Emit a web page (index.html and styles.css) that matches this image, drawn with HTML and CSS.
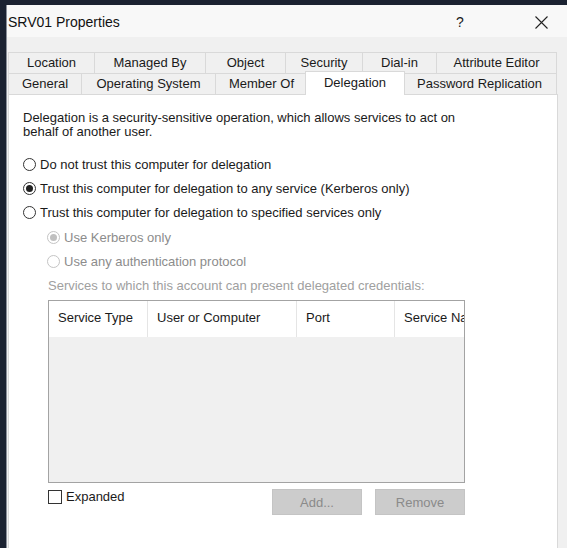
FILE: index.html
```html
<!DOCTYPE html>
<html>
<head>
<meta charset="utf-8">
<link rel="stylesheet" href="styles.css">
</head>
<body>
<div class="dialog">
  <div class="titlebar">
    <span class="title">SRV01 Properties</span>
    <span class="help">?</span>
    <span class="close"><svg width="13" height="13" viewBox="0 0 13 13"><path d="M0.5 0.5 L12.5 12.5 M12.5 0.5 L0.5 12.5" stroke="#222" stroke-width="1.1" fill="none"/></svg></span>
  </div>
  <div class="body">
    <div class="tabs">
      <div class="tabrow">
        <div class="tab w-location">Location</div>
        <div class="tab w-managed">Managed By</div>
        <div class="tab w-object">Object</div>
        <div class="tab w-security">Security</div>
        <div class="tab w-dialin">Dial-in</div>
        <div class="tab w-attr">Attribute Editor</div>
      </div>
      <div class="tabrow">
        <div class="tab w-general">General</div>
        <div class="tab w-os">Operating System</div>
        <div class="tab w-member">Member Of</div>
        <div class="tab w-deleg selected">Delegation</div>
        <div class="tab w-pwd">Password Replication</div>
      </div>
    </div>
    <div class="panel">
      <p class="desc">Delegation is a security-sensitive operation, which allows services to act on<br>behalf of another user.</p>
      <div class="options">
        <div class="option"><span class="radio"></span><span>Do not trust this computer for delegation</span></div>
        <div class="option"><span class="radio checked"></span><span>Trust this computer for delegation to any service (Kerberos only)</span></div>
        <div class="option"><span class="radio"></span><span>Trust this computer for delegation to specified services only</span></div>
      </div>
      <div class="sub">
        <div class="suboptions">
          <div class="option disabled"><span class="radio checked"></span><span>Use Kerberos only</span></div>
          <div class="option disabled"><span class="radio"></span><span>Use any authentication protocol</span></div>
        </div>
        <div class="services-label">Services to which this account can present delegated credentials:</div>
        <div class="table">
          <div class="thead">
            <div class="th c1">Service Type</div>
            <div class="th c2">User or Computer</div>
            <div class="th c3">Port</div>
            <div class="th c4">Service Name</div>
          </div>
          <div class="tbody"></div>
        </div>
        <div class="bottom">
          <label class="check"><span class="box"></span><span>Expanded</span></label>
          <div class="buttons">
            <div class="btn">Add...</div>
            <div class="btn">Remove</div>
          </div>
        </div>
      </div>
    </div>
  </div>
</div>
</body>
</html>
```
FILE: styles.css
```css
* { box-sizing: border-box; }
html, body { margin: 0; padding: 0; }
body {
  background: #1b2231;
  width: 567px;
  height: 548px;
  overflow: hidden;
  font-family: "Liberation Sans", Arial, sans-serif;
  font-size: 13px;
  color: #1a1a1a;
}
.dialog {
  margin: 5px 0 0 6px;
  width: 570px;
  height: 560px;
  background: #f0f0f0;
  border-left: 1px solid #8a8f99;
  display: flex;
  flex-direction: column;
}
.titlebar {
  height: 32px;
  background: #f8f8f8;
  display: flex;
  align-items: center;
  padding-left: 1px;
}
.title {
  font-size: 14px;
  color: #111;
  flex: 1;
  padding-top: 2px;
}
.help {
  font-size: 14px;
  width: 20px;
  margin-right: 59px;
  padding-top: 2px;
}
.close {
  width: 41px;
  display: flex;
  padding-top: 3px;
}
.body {
  flex: 1;
  display: flex;
  flex-direction: column;
  padding: 15px 0 0 1px;
}
.tabs { display: flex; flex-direction: column; }
.tabrow { display: flex; height: 21px; }
.tab {
  height: 21px;
  line-height: 20px;
  text-align: center;
  background: #f0f0f0;
  border: 1px solid #d9d9d9;
  border-right: none;
  border-bottom: none;
  color: #1a1a1a;
  white-space: nowrap;
}
.tab:last-child { border-right: 1px solid #d9d9d9; }
.tab.selected {
  background: #fff;
  height: 24px;
  margin: -2px -2px 0 -2px;
  position: relative;
  z-index: 2;
  line-height: 22px;
  border-right: 1px solid #d9d9d9;
}
.w-location { width: 86px; }
.w-managed { width: 111px; }
.w-object { width: 80px; }
.w-security { width: 77px; }
.w-dialin { width: 74px; }
.w-attr { width: 121px; }
.w-general { width: 73px; }
.w-os { width: 134px; }
.w-member { width: 92px; }
.w-deleg { width: 100px; }
.w-pwd { width: 154px; }
.w-deleg + .w-pwd { border-left: none; }
.panel {
  flex: 1;
  width: 550px;
  background: #fff;
  border: 1px solid #d9d9d9;
  padding: 16px 0 0 14px;
  position: relative;
  z-index: 1;
}
.desc {
  margin: 0;
  line-height: 14px;
}
.options {
  display: flex;
  flex-direction: column;
  gap: 4px;
  margin-top: 15px;
}
.option {
  height: 20px;
  display: flex;
  align-items: center;
  gap: 4px;
  white-space: nowrap;
}
.radio {
  width: 13px;
  height: 13px;
  border: 1px solid #333;
  border-radius: 50%;
  background: #fff;
  display: flex;
  align-items: center;
  justify-content: center;
  flex: none;
}
.radio.checked::after {
  content: "";
  width: 7px;
  height: 7px;
  border-radius: 50%;
  background: #222;
}
.option.disabled { color: #8c8c8c; }
.option.disabled .radio { border-color: #c4c4c4; }
.option.disabled .radio.checked::after { background: #c0c0c0; }
.sub { padding-left: 24px; }
.suboptions {
  display: flex;
  flex-direction: column;
  gap: 4px;
  margin-top: 5px;
}
.services-label {
  color: #a0a0a0;
  height: 20px;
  line-height: 20px;
  margin-top: 5px;
  padding-left: 1px;
  white-space: nowrap;
}
.table {
  margin-top: 4px;
  margin-left: 1px;
  width: 417px;
  height: 183px;
  border: 1px solid #a3a3a3;
  display: flex;
  flex-direction: column;
  overflow: hidden;
}
.thead {
  height: 36px;
  background: #fff;
  display: flex;
  flex: none;
}
.th {
  line-height: 34px;
  padding-left: 9px;
  border-right: 1px solid #e5e5e5;
  white-space: nowrap;
  overflow: hidden;
  flex: none;
}
.c1 { width: 99px; }
.c2 { width: 149px; }
.c3 { width: 98px; }
.c4 { width: 100px; border-right: none; }
.tbody { flex: 1; background: #f0f0f0; }
.bottom {
  display: flex;
  align-items: flex-start;
  margin-top: 6px;
  margin-left: 1px;
  width: 417px;
}
.check {
  display: flex;
  align-items: center;
  gap: 4px;
  height: 15px;
  flex: 1;
}
.box {
  width: 14px;
  height: 14px;
  border: 1px solid #333;
  background: #fff;
}
.buttons { display: flex; gap: 13px; }
.btn {
  width: 90px;
  height: 26px;
  line-height: 26px;
  text-align: center;
  background: #cccccc;
  border: 1px solid #c4c4c4;
  color: #8a8a8a;
}
```
